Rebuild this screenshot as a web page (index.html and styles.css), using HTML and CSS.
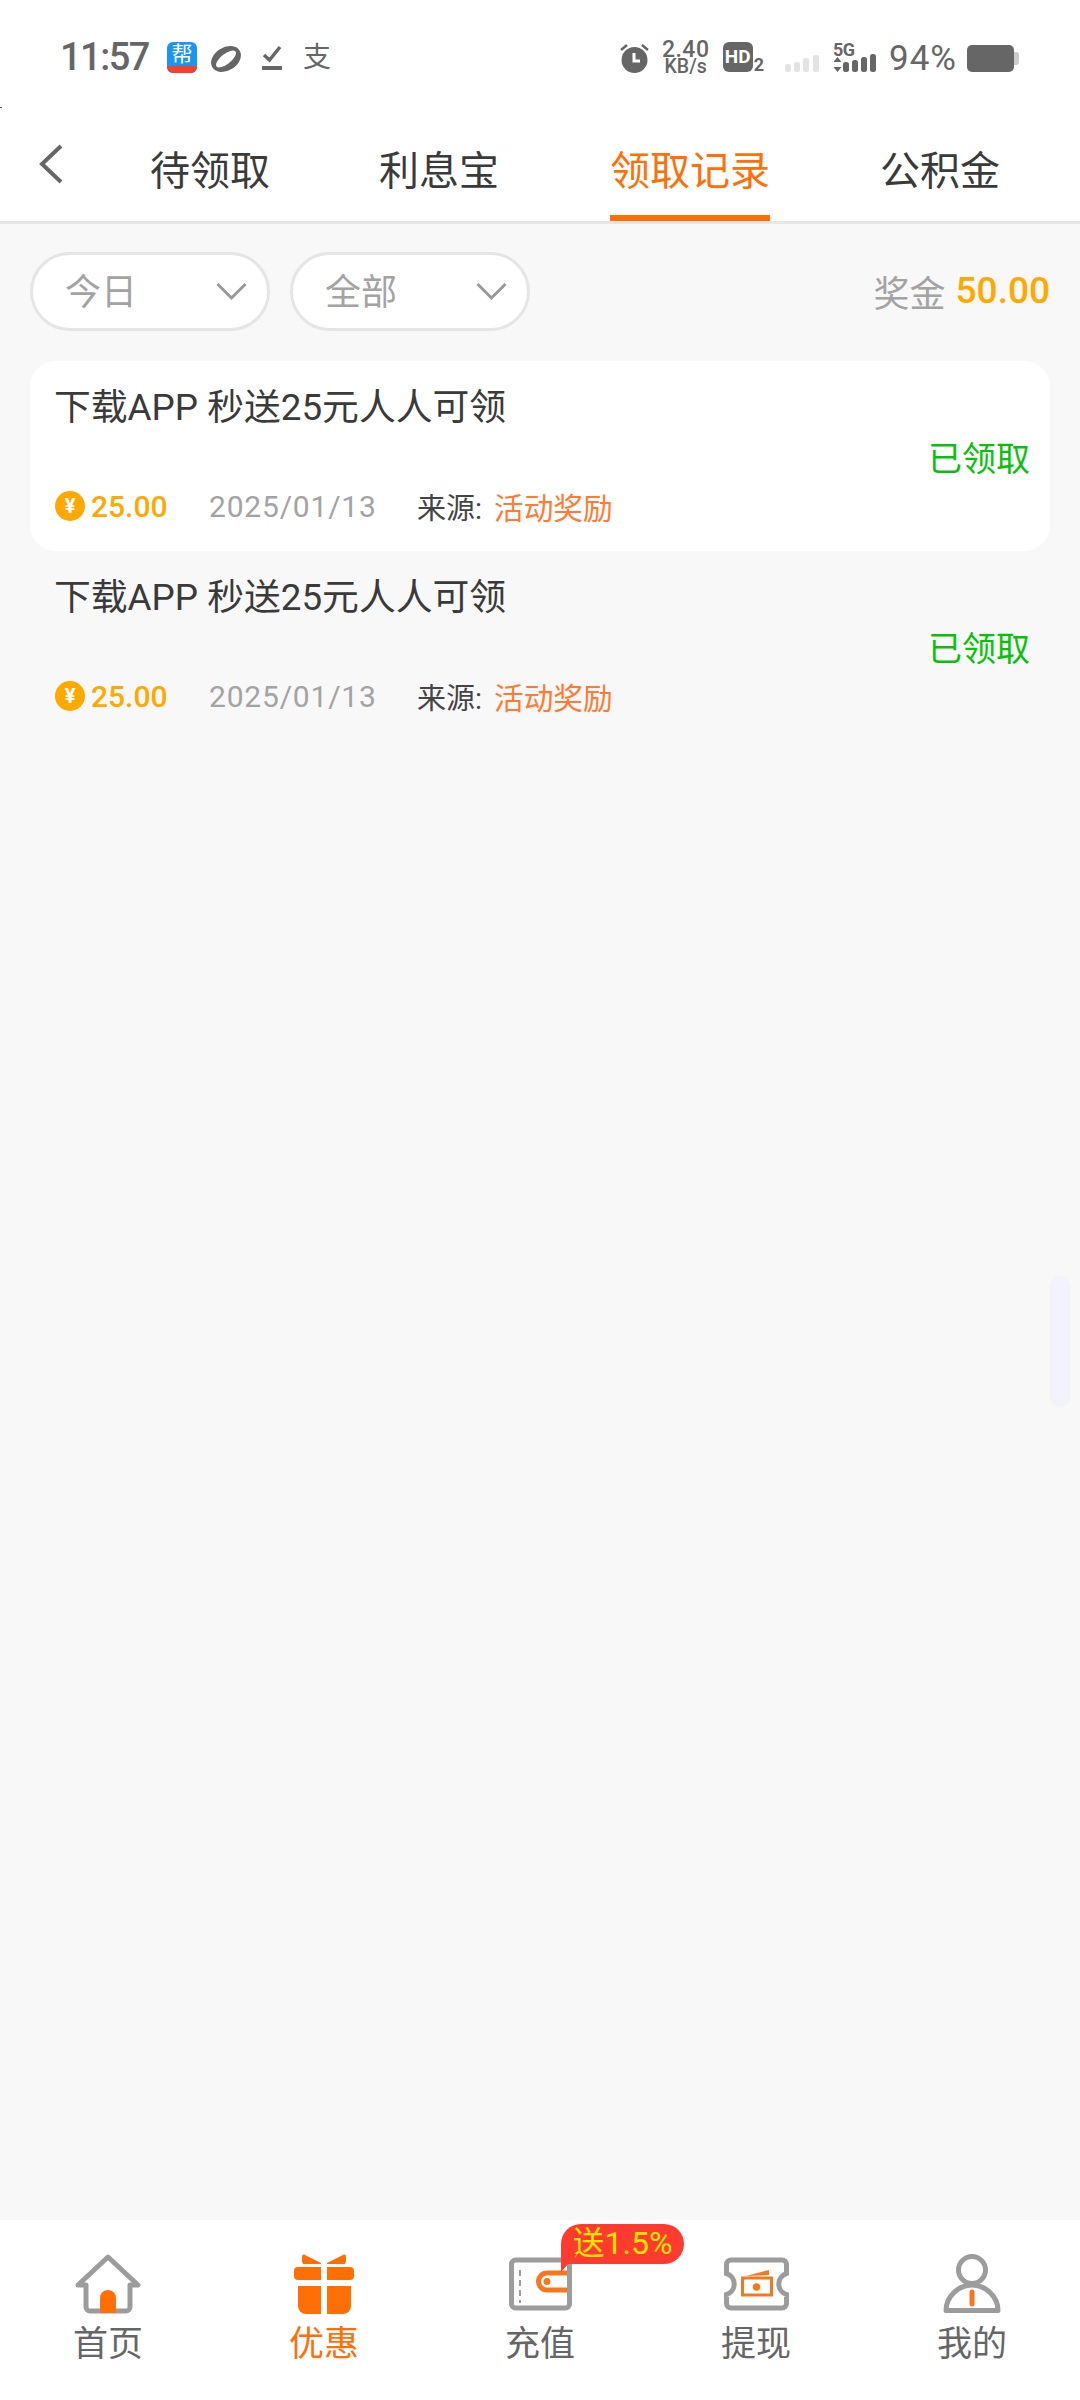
FILE: index.html
```html
<!DOCTYPE html>
<html lang="zh-CN">
<head>
<meta charset="utf-8">
<title>领取记录</title>
<link rel="stylesheet" href="styles.css">
</head>
<body>
<div class="app">
  <span class="edge-dot"></span>
  <header class="status">
    <span class="clock">11:57</span>
    <span class="app-badge"><span class="app-badge-top">帮</span><span class="app-badge-band"></span></span>
    <svg class="ic-planet" width="30" height="28" viewBox="0 0 30 28"><ellipse cx="15" cy="14" rx="16" ry="11.500" transform="rotate(-32 15 14)" fill="#666"/><ellipse cx="15" cy="14" rx="12" ry="5" transform="rotate(-38 15 14)" fill="#fff"/></svg>
    <svg class="ic-check" width="20" height="26" viewBox="0 0 20 26"><path d="M2 10l5.500 5L18 2" fill="none" stroke="#666" stroke-width="3.500"/><rect y="21" width="20" height="4" fill="#666"/></svg>
    <span class="zhi">支</span>
    <span class="status-spacer"></span>
    <svg class="ic-alarm" width="29" height="30" viewBox="0 0 29 30"><circle cx="14.500" cy="17" r="13" fill="#666"/><path d="M14 10v8h6" fill="none" stroke="#fff" stroke-width="3"/><path d="M1 7l6-5M28 7l-6-5" stroke="#666" stroke-width="2.500"/></svg>
    <span class="speed"><b>2.40</b><i>KB/s</i></span>
    <span class="hd"><span class="hd-box">HD</span><span class="hd-num">2</span></span>
    <svg class="ic-sig-off" width="35" height="17" viewBox="0 0 35 17"><rect y="9" width="6" height="8" rx="2" fill="#e3e3e3"/><rect x="9" y="7" width="6" height="10" rx="2" fill="#e3e3e3"/><rect x="18" y="3" width="6" height="14" rx="2" fill="#e3e3e3"/><rect x="28" y="0" width="6" height="17" rx="2" fill="#e3e3e3"/></svg>
    <span class="five-g">
      <span class="five-g-label">5G</span>
      <svg width="44" height="18" viewBox="0 0 44 18"><path d="M4.500 3l4 5h-8zM4.500 18l4-5h-8z" fill="#666"/><rect x="10" y="8" width="6" height="10" rx="2.500" fill="#666"/><rect x="19" y="6" width="6" height="12" rx="2.500" fill="#666"/><rect x="28" y="3" width="6" height="15" rx="2.500" fill="#666"/><rect x="37" y="0" width="6" height="18" rx="2.500" fill="#666"/></svg>
    </span>
    <span class="pct">94%</span>
    <svg class="ic-batt" width="53" height="28" viewBox="0 0 53 28"><rect width="47" height="27" rx="5" fill="#666"/><path d="M47 7h2a3 3 0 0 1 3 3v7a3 3 0 0 1-3 3h-2z" fill="#ccc"/></svg>
  </header>

  <nav class="tabs">
    <svg class="back" width="26" height="40" viewBox="0 0 26 40"><path d="M23 2L4 20l19 18" fill="none" stroke="#666" stroke-width="4"/></svg>
    <a class="tab tab-a">待领取</a>
    <a class="tab tab-b">利息宝</a>
    <a class="tab tab-c active">领取记录</a>
    <a class="tab tab-d">公积金</a>
  </nav>

  <main class="content">
    <div class="filters">
      <div class="pill"><span>今日</span><svg width="31" height="19" viewBox="0 0 31 19"><path d="M1.500 2L15.500 16 29.500 2" fill="none" stroke="#999" stroke-width="3"/></svg></div>
      <div class="pill"><span>全部</span><svg width="31" height="19" viewBox="0 0 31 19"><path d="M1.500 2L15.500 16 29.500 2" fill="none" stroke="#999" stroke-width="3"/></svg></div>
      <div class="bonus">奖金 <b>50.00</b></div>
    </div>

    <article class="record record-first">
      <h3 class="rec-title">下载APP 秒送25元人人可领</h3>
      <div class="rec-state">已领取</div>
      <div class="rec-meta">
        <span class="coin">¥</span><span class="amount">25.00</span>
        <span class="date">2025/01/13</span>
        <span class="src">来源:</span><span class="src-name">活动奖励</span>
      </div>
    </article>
    <article class="record">
      <h3 class="rec-title">下载APP 秒送25元人人可领</h3>
      <div class="rec-state">已领取</div>
      <div class="rec-meta">
        <span class="coin">¥</span><span class="amount">25.00</span>
        <span class="date">2025/01/13</span>
        <span class="src">来源:</span><span class="src-name">活动奖励</span>
      </div>
    </article>
  </main>

  <div class="edge-handle"></div>

  <footer class="tabbar">
    <div class="bar-item">
      <svg width="66" height="60" viewBox="0 0 66 60"><path d="M3 31L33 3l30 28h-8v22a4 4 0 0 1-4 4H15a4 4 0 0 1-4-4V31z" fill="none" stroke="#9c9c9c" stroke-width="5" stroke-linejoin="round"/><path d="M25 59V44a8 8 0 0 1 16 0v15z" fill="#ff6f06"/></svg>
      <span>首页</span>
    </div>
    <div class="bar-item on">
      <svg width="60" height="60" viewBox="0 0 60 60"><path d="M8 3c0-2 1-3 3-2l16 8v1H10C8 10 8 8 8 3zM52 3c0-2-1-3-3-2L33 9v1h17c2 0 2-2 2-7z" fill="#ff6f06"/><path d="M4 13h23v13H4a4 4 0 0 1-4-4v-5a4 4 0 0 1 4-4zM33 13h23a4 4 0 0 1 4 4v5a4 4 0 0 1-4 4H33zM4 32h23v28H12a8 8 0 0 1-8-8zM33 32h24v20a8 8 0 0 1-8 8H33z" fill="#ff6f06"/></svg>
      <span>优惠</span>
    </div>
    <div class="bar-item">
      <svg width="63" height="60" viewBox="0 0 63 60"><rect x="2.500" y="6" width="58" height="48" rx="4" fill="none" stroke="#9c9c9c" stroke-width="5"/><path d="M11 16v33" stroke="#9c9c9c" stroke-width="2" stroke-dasharray="6 4"/><path d="M58 19H38a8.500 8.500 0 0 0 0 17h20" fill="none" stroke="#f5781e" stroke-width="5"/><circle cx="38" cy="27.500" r="3.500" fill="#f5781e"/></svg>
      <span>充值</span>
      <em class="promo">送1.5%</em>
    </div>
    <div class="bar-item">
      <svg width="65" height="60" viewBox="0 0 65 60"><path d="M7 6h51a4.500 4.500 0 0 1 4.500 4.500v9a11 11 0 0 0 0 21v9A4.500 4.500 0 0 1 58 54H7a4.500 4.500 0 0 1-4.500-4.500v-9a11 11 0 0 0 0-21v-9A4.500 4.500 0 0 1 7 6z" fill="none" stroke="#9c9c9c" stroke-width="5"/><rect x="18.500" y="24" width="29" height="17" fill="none" stroke="#f5781e" stroke-width="3"/><circle cx="32.500" cy="33" r="3.800" fill="#f5781e"/><path d="M22 22l23-6v5z" fill="#f5781e"/></svg>
      <span>提现</span>
    </div>
    <div class="bar-item">
      <svg width="58" height="60" viewBox="0 0 58 60"><circle cx="29" cy="16" r="13.500" fill="none" stroke="#9c9c9c" stroke-width="5"/><path d="M3 56.500C3 42 16 31 29 31s26 11 26 25.500z" fill="none" stroke="#9c9c9c" stroke-width="5" stroke-linejoin="round"/><path d="M29 38v12" stroke="#f5781e" stroke-width="5" stroke-linecap="round"/></svg>
      <span>我的</span>
    </div>
  </footer>
</div>
</body>
</html>
```

FILE: styles.css
```css
* { box-sizing: border-box; margin: 0; padding: 0; }

html, body { width: 1080px; height: 2400px; overflow: hidden; background: #f8f8f8; }

body { font-family: Roboto, "Noto Sans CJK SC", sans-serif; color: #333; }

.app { position: relative; width: 1080px; height: 2400px; display: flex; flex-direction: column; }

.edge-dot { position: absolute; left: 0; top: 107px; width: 2px; height: 1px; background: #555; }

/* status bar */
.status { height: 110px; background: #fff; display: flex; align-items: flex-start; padding: 0 0 0 60px; color: #666; }
.clock { font-size: 38px; font-weight: 500; line-height: 30px; margin-top: 42px; width: 107px; letter-spacing: -1.500px; }
.app-badge { width: 30px; height: 31px; margin-top: 42px; border-radius: 6px; overflow: hidden; display: flex; flex-direction: column; background: #1a96f0; }
.app-badge-top { height: 24px; color: #fff; font-size: 21px; line-height: 24px; text-align: center; }
.app-badge-band { height: 7px; background: #f5402c; }
.ic-planet { margin: 45px 0 0 14px; }
.ic-check { margin: 45px 0 0 21px; }
.zhi { font-size: 28px; line-height: 30px; margin: 43px 0 0 21px; color: #666; }
.status-spacer { flex: 1; }
.ic-alarm { margin-top: 43px; }
.speed { width: 46px; margin: 40px 0 0 14px; display: flex; flex-direction: column; align-items: center; }
.speed b { font-size: 23px; font-weight: 500; line-height: 19px; letter-spacing: 0.5px; }
.speed i { font-size: 19.500px; font-style: normal; font-weight: 500; line-height: 16px; }
.hd { margin: 42px 0 0 14px; display: flex; align-items: flex-end; height: 30px; }
.hd-box { width: 30px; height: 30px; border-radius: 6px; background: #666; color: #fff; font-size: 19px; font-weight: 700; line-height: 30px; text-align: center; }
.hd-num { font-size: 18px; font-weight: 700; line-height: 14px; margin-left: 1px; }
.ic-sig-off { margin: 55px 0 0 21px; }
.five-g { position: relative; margin: 54px 0 0 13px; width: 44px; height: 18px; display: block; }
.five-g-label { position: absolute; left: 0; top: -11px; font-size: 18px; font-weight: 700; line-height: 14px; letter-spacing: -0.5px; }
.pct { font-size: 35px; line-height: 30px; margin: 44px 0 0 12px; letter-spacing: 1px; }
.ic-batt { margin: 45px 60px 0 10px; }

/* top tabs */
.tabs { position: relative; height: 114px; display: flex; background: #fff; border-bottom: 3px solid #e6e6e6; }
.back { position: absolute; left: 38px; top: 34px; }
.tab { position: absolute; top: 0; height: 111px; font-size: 40px; line-height: 124px; color: #3a3a3a; font-weight: 400; }
.tab-a { left: 150px; }
.tab-b { left: 379px; }
.tab-c { left: 610px; }
.tab-d { left: 880px; }
.tab.active { color: #ff6f06; }
.tab.active::after { content: ""; position: absolute; left: 0; right: 0; bottom: 0; height: 6px; background: #ff6f06; }

/* filter row */
.content { flex: 1; padding: 28px 30px 0; display: flex; flex-direction: column; }
.filters { display: flex; align-items: center; gap: 20px; height: 79px; margin-bottom: 30px; }
.pill { width: 240px; height: 79px; border: 3px solid #e5e5e5; border-radius: 40px; background: #fff; display: flex; align-items: center; justify-content: space-between; padding: 0 20px 0 32px; font-size: 36px; color: #a3a3a3; }
.pill span { padding-bottom: 5px; }
.bonus { margin-left: auto; padding-bottom: 2px; font-size: 36px; color: #a3a3a3; display: flex; align-items: center; gap: 10px; }
.bonus b { font-weight: 500; color: #ffa800; font-size: 37px; }

/* reward records */
.record { position: relative; height: 190px; padding: 25px 24px 0; }
.record-first { background: #fff; border-radius: 26px; }
.rec-title { font-size: 36.800px; font-weight: 400; line-height: 44px; color: #3a3a3a; }
.rec-state { position: absolute; right: 20px; top: 75px; font-size: 34px; line-height: 46px; color: #09c10b; }
.rec-meta { position: absolute; left: 25px; top: 130px; display: flex; align-items: center; height: 30px; font-size: 28px; white-space: nowrap; }
.coin { width: 30px; height: 30px; border-radius: 50%; background: #ffa800; color: #fff; font-size: 20px; font-weight: 700; line-height: 30px; text-align: center; }
.amount { margin-left: 6px; width: 118px; color: #ffa800; font-size: 30px; font-weight: 500; }
.date { width: 208px; color: #a3a3a3; font-size: 30px; letter-spacing: 0.800px; }
.src { width: 77px; color: #444; font-size: 29px; }
.src-name { color: #ff7a33; font-size: 29.700px; }

/* side handle */
.edge-handle { position: absolute; left: 1052px; top: 1278px; width: 16px; height: 127px; border-radius: 8px; background: #f3f3fb; box-shadow: 0 0 5px rgba(0, 0, 0, 0.06); }

/* bottom bar */
.tabbar { height: 180px; background: #fff; display: grid; grid-template-columns: repeat(5, 216px); }
.bar-item { position: relative; display: flex; flex-direction: column; align-items: center; padding-top: 34px; color: #666; }
.bar-item span { font-size: 35px; line-height: 46px; margin-top: 8px; }
.bar-item.on span { color: #ff6f06; }
.promo { position: absolute; left: 129px; top: 4px; width: 123px; height: 40px; border-radius: 20px 20px 20px 0; background: #ff3b30; color: #ffe600; font-size: 32px; font-style: normal; line-height: 38px; text-align: center; white-space: nowrap; }
.promo::before { content: ""; position: absolute; left: 0; top: 30px; width: 0; height: 0; border-top: 18px solid #ff3b30; border-right: 16px solid transparent; }
```
